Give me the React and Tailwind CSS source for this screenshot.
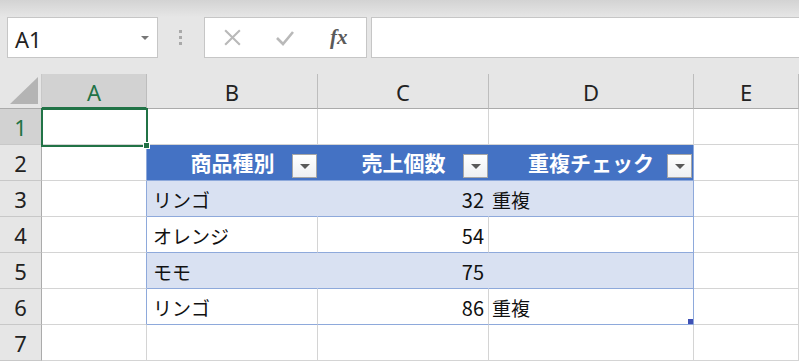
import React from 'react';

const COLS = ['A', 'B', 'C', 'D', 'E'];
const WIDTHS = ['w-[105px]', 'w-[171px]', 'w-[171px]', 'w-[205px]', 'w-[105px]'];

const ROWS = [
    { n: 1 },
    { n: 2, header: true },
    { n: 3, band: true, name: 'リンゴ', qty: 32, dup: '重複' },
    { n: 4, name: 'オレンジ', qty: 54, dup: '' },
    { n: 5, band: true, name: 'モモ', qty: 75, dup: '' },
    { n: 6, name: 'リンゴ', qty: 86, dup: '重複', last: true },
    { n: 7 },
];

const jp = "font-['Noto_Sans_CJK_JP',sans-serif]";
const ui = "font-['Noto_Sans','Noto_Sans_CJK_JP',sans-serif]";

const FilterButton = () => (
    <div className="absolute right-[1px] top-[9px] w-[25px] h-[24px] border border-[#a6a6a6] bg-gradient-to-b from-white to-[#eef0f3] flex items-center justify-center">
        <div className="w-0 h-0 border-l-[5px] border-r-[5px] border-t-[5px] border-l-transparent border-r-transparent border-t-[#595959]" />
    </div>
);

const HeaderCell = ({ w, label, last }) => (
    <div className={`${w} relative h-full bg-[#4472c4] border-b border-[#8ea9db] ${last ? 'border-r border-r-[#8ea9db]' : ''} flex items-center justify-center`}>
        <span className={`${jp} text-[21px] font-bold text-white leading-none`}>{label}</span>
        <FilterButton />
    </div>
);

const Row = ({ row }) => {
    const active = row.n === 1;
    const inTable = row.n >= 2 && row.n <= 6;
    const bg = row.band ? 'bg-[#d9e1f2]' : 'bg-white';
    const bottomTable = inTable ? 'border-b-[#8ea9db]' : 'border-b-[#d4d4d4]';
    const innerR = row.band ? 'border-r-[#d9e1f2]' : 'border-r-[#d4d4d4]';
    return (
        <div className="flex h-[36px]">
            <div className={`w-[42px] h-full border-r border-b border-r-[#ababab] border-b-[#c8c8c8] flex items-center justify-center ${active ? 'bg-[#d2d2d2] text-[#217346]' : 'bg-[#e6e6e6] text-[#222]'}`}>
                <span className={`${ui} text-[22px] leading-none`}>{row.n}</span>
            </div>
            <div className={`w-[105px] h-full bg-white border-r border-b border-b-[#d4d4d4] ${inTable ? 'border-r-[#8ea9db]' : 'border-r-[#d4d4d4]'}`} />
            {row.header ? (
                <>
                    <HeaderCell w="w-[171px]" label="商品種別" />
                    <HeaderCell w="w-[171px]" label="売上個数" />
                    <HeaderCell w="w-[205px]" label="重複チェック" last />
                </>
            ) : inTable ? (
                <>
                    <div className={`w-[171px] h-full ${bg} border-r border-b ${innerR} ${bottomTable} flex items-center pl-[6px] pt-[2px]`}>
                        <span className={`${jp} text-[19px] text-[#111] leading-none`}>{row.name}</span>
                    </div>
                    <div className={`w-[171px] h-full ${bg} border-r border-b ${innerR} ${bottomTable} flex items-center justify-end pr-[4px] pt-[2px]`}>
                        <span className={`${jp} text-[20px] text-[#111] leading-none`}>{row.qty}</span>
                    </div>
                    <div className={`relative w-[205px] h-full ${bg} border-r border-b border-r-[#8ea9db] ${bottomTable} flex items-center pl-[3px] pt-[2px]`}>
                        <span className={`${jp} text-[19px] text-[#111] leading-none`}>{row.dup}</span>
                        {row.last && <div className="absolute right-0 bottom-0 w-[5px] h-[5px] bg-[#3f51b5]" />}
                    </div>
                </>
            ) : (
                <>
                    <div className="w-[171px] h-full bg-white border-r border-b border-[#d4d4d4]" />
                    <div className="w-[171px] h-full bg-white border-r border-b border-[#d4d4d4]" />
                    <div className="w-[205px] h-full bg-white border-r border-b border-[#d4d4d4]" />
                </>
            )}
            <div className="w-[105px] h-full bg-white border-r border-b border-[#d4d4d4]" />
        </div>
    );
};

export default function App() {
    return (
        <div className="relative w-[799px] h-[362px] overflow-hidden bg-white">
            {/* Formula bar area */}
            <div className="h-[74px] bg-[#e6e6e6] relative">
                <div className="h-[17px] bg-gradient-to-b from-[#d3d3d3] to-[#e6e6e6]" />
                <div className="flex items-start h-[41px]">
                    {/* Name box */}
                    <div className="ml-[7px] w-[151px] h-full bg-white border border-[#c6c6c6] flex items-center pl-[7px] pr-[8px]">
                        <span className={`${ui} text-[22px] text-[#222] leading-none flex-1 pt-[2px]`}>A1</span>
                        <div className="w-0 h-0 border-l-[4px] border-r-[4px] border-t-[4px] border-l-transparent border-r-transparent border-t-[#777]" />
                    </div>
                    {/* Grip dots */}
                    <div className="ml-[21px] mt-[13px] flex flex-col gap-[3px]">
                        <div className="w-[3px] h-[3px] bg-[#a9a9a9]" />
                        <div className="w-[3px] h-[3px] bg-[#a9a9a9]" />
                        <div className="w-[3px] h-[3px] bg-[#a9a9a9]" />
                    </div>
                    {/* Cancel / Enter / fx */}
                    <div className="ml-[22px] w-[163px] h-full bg-white border border-[#c6c6c6] flex items-center">
                        <svg className="ml-[17px]" width="21" height="21" viewBox="0 0 20 20">
                            <path d="M3 3 L17 17 M17 3 L3 17" stroke="#b9b9b9" strokeWidth="2" fill="none" />
                        </svg>
                        <svg className="ml-[31px]" width="22" height="20" viewBox="0 0 22 20">
                            <path d="M3 10 L9 16 L19 4" stroke="#b9b9b9" strokeWidth="2.6" fill="none" />
                        </svg>
                        <span className="ml-[34px] font-['Liberation_Serif',serif] italic font-bold text-[21px] text-[#5a5a5a] leading-none">fx</span>
                    </div>
                    {/* Formula input */}
                    <div className="ml-[4px] flex-1 h-full bg-white border border-r-0 border-[#c6c6c6]" />
                </div>
            </div>

            {/* Column headers */}
            <div className="flex h-[35px]">
                <div className="w-[42px] h-full bg-[#e6e6e6] border-r border-b border-r-[#c8c8c8] border-b-[#ababab] flex items-end justify-end pr-[3px] pb-[4px]">
                    <svg width="28" height="27" viewBox="0 0 28 27">
                        <polygon points="0,27 28,27 28,0" fill="#b4b4b4" />
                    </svg>
                </div>
                {COLS.map((c, i) => (
                    <div
                        key={c}
                        className={`${WIDTHS[i]} h-full border-r flex items-center justify-center pt-[2px] ${i === 0 ? 'bg-[#d2d2d2] border-b-2 border-b-[#217346] text-[#217346] border-r-[#bdbdbd]' : 'bg-[#e6e6e6] border-b border-b-[#ababab] text-[#222] border-r-[#bdbdbd]'}`}
                    >
                        <span className={`${ui} text-[22px] leading-none`}>{c}</span>
                    </div>
                ))}
            </div>

            {/* Rows */}
            {ROWS.map((row) => (
                <Row key={row.n} row={row} />
            ))}

            {/* Active cell selection */}
            <div className="absolute left-[41px] top-[108px] w-[107px] h-[39px] border-2 border-[#217346] pointer-events-none" />
            <div className="absolute left-[143px] top-[142px] w-[7px] h-[7px] bg-[#217346] border border-white" />
        </div>
    );
}
